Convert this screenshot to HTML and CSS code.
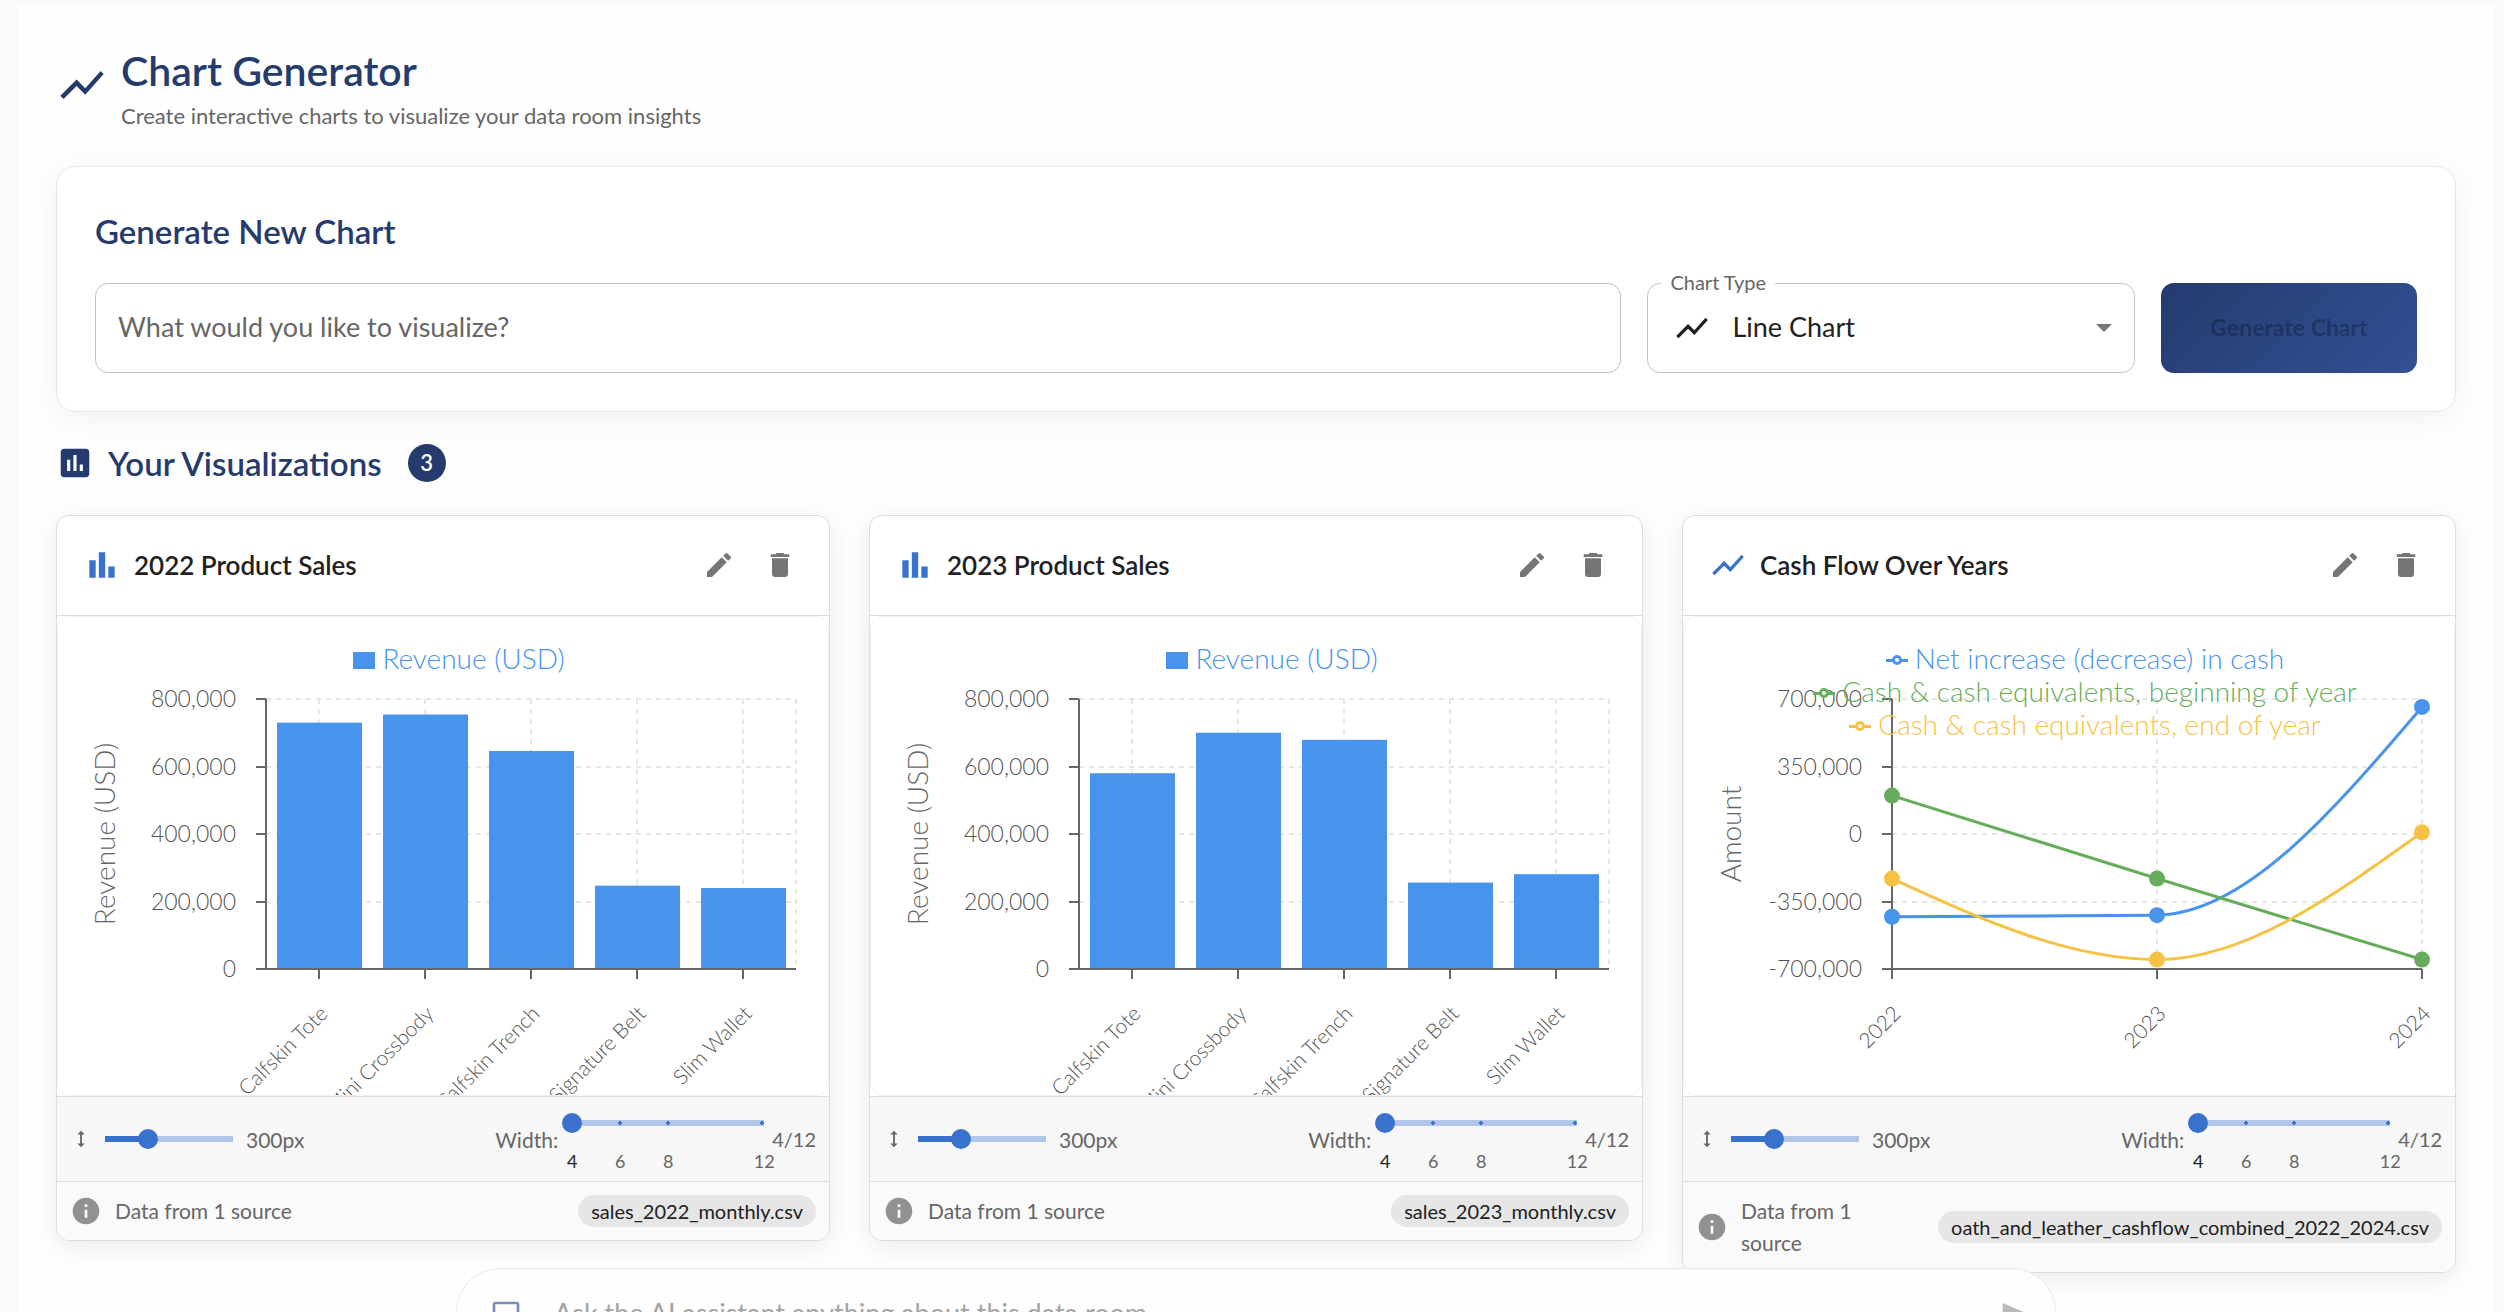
FILE: index.html
```html
<!DOCTYPE html>
<html lang="en">
<head>
    <meta charset="UTF-8">
    <meta name="viewport" content="width=device-width, initial-scale=1.0">
    <title>Chart Generator</title>
    <link rel="stylesheet" href="styles.css">
</head>
<body>
    <!-- Shared icons -->
    <svg class="sprite" aria-hidden="true">
        <symbol id="icon-line" viewBox="0 0 24 24"><path d="M3.5 18.49l6-6.01 4 4L22 6.92l-1.41-1.41-7.09 7.97-4-4L2 16.99z"/></symbol>
        <symbol id="icon-bar" viewBox="0 0 24 24"><path d="M4 9h4v11H4zm12 4h4v7h-4zm-6-9h4v16h-4z"/></symbol>
        <symbol id="icon-assessment" viewBox="0 0 24 24"><path d="M19 3H5c-1.1 0-2 .9-2 2v14c0 1.1.9 2 2 2h14c1.1 0 2-.9 2-2V5c0-1.1-.9-2-2-2zM9 17H7v-7h2v7zm4 0h-2V7h2v10zm4 0h-2v-4h2v4z"/></symbol>
        <symbol id="icon-edit" viewBox="0 0 24 24"><path d="M3 17.25V21h3.75L17.81 9.94l-3.75-3.75L3 17.25zM20.71 7.04c.39-.39.39-1.02 0-1.41l-2.34-2.34a.996.996 0 0 0-1.41 0l-1.83 1.83 3.75 3.75 1.83-1.83z"/></symbol>
        <symbol id="icon-delete" viewBox="0 0 24 24"><path d="M6 19c0 1.1.9 2 2 2h8c1.1 0 2-.9 2-2V7H6v12zM19 4h-3.5l-1-1h-5l-1 1H5v2h14V4z"/></symbol>
        <symbol id="icon-height" viewBox="0 0 24 24"><path d="M13 6.99h3L12 3 8 6.99h3v10.02H8L12 21l4-3.99h-3z"/></symbol>
        <symbol id="icon-info" viewBox="0 0 24 24"><path d="M12 2C6.48 2 2 6.48 2 12s4.48 10 10 10 10-4.48 10-10S17.52 2 12 2zm1 15h-2v-6h2v6zm0-8h-2V7h2v2z"/></symbol>
        <symbol id="icon-chat" viewBox="0 0 24 24"><path d="M20 2H4c-1.1 0-2 .9-2 2v18l4-4h14c1.1 0 2-.9 2-2V4c0-1.1-.9-2-2-2zm0 14H6l-2 2V4h16v12z"/></symbol>
        <symbol id="icon-send" viewBox="0 0 24 24"><path d="M2.01 21L23 12 2.01 3 2 10l15 2-15 2z"/></symbol>
    </svg>

    <main class="panel">
        <header class="page-header">
            <svg class="icon icon-xl"><use href="#icon-line"/></svg>
            <div>
                <h1>Chart Generator</h1>
                <p class="subtitle">Create interactive charts to visualize your data room insights</p>
            </div>
        </header>

        <section class="generator">
            <h2>Generate New Chart</h2>
            <form class="generator-form">
                <input class="prompt" type="text" placeholder="What would you like to visualize?" aria-label="What would you like to visualize?">
                <div class="select-field">
                    <label for="chartType">Chart Type</label>
                    <svg class="icon icon-lg select-icon"><use href="#icon-line"/></svg>
                    <select id="chartType">
                        <option>Line Chart</option>
                    </select>
                </div>
                <button class="btn-generate" type="submit" disabled>Generate Chart</button>
            </form>
        </section>

        <div class="section-title">
            <svg class="icon icon-lg"><use href="#icon-assessment"/></svg>
            <h2>Your Visualizations</h2>
            <span class="count">3</span>
        </div>

        <div class="cards">
            <article class="card">
                <header class="card-header">
                    <svg class="icon icon-lg"><use href="#icon-bar"/></svg>
                    <h3>2022 Product Sales</h3>
                    <button class="icon-btn" aria-label="Edit"><svg class="icon"><use href="#icon-edit"/></svg></button>
                    <button class="icon-btn" aria-label="Delete"><svg class="icon"><use href="#icon-delete"/></svg></button>
                </header>
                <div class="chart">
                    <svg class="plot" id="sales2022" viewBox="0 0 770 478"></svg>
                    <ul class="legend">
                        <li class="blue"><i class="swatch"></i>Revenue (USD)</li>
                    </ul>
                </div>
                <div class="controls">
                    <svg class="icon icon-sm"><use href="#icon-height"/></svg>
                    <input class="slider height-slider" type="range" min="200" max="500" value="300" aria-label="Height">
                    <span class="height-value">300px</span>
                    <label for="width1">Width:</label>
                    <div class="width-field">
                        <input class="slider width-slider" id="width1" type="range" min="4" max="12" step="2" value="4">
                        <div class="marks"><b>4</b><span>6</span><span>8</span><span></span><span>12</span></div>
                    </div>
                    <span class="width-value">4/12</span>
                </div>
                <footer class="card-footer">
                    <svg class="icon"><use href="#icon-info"/></svg>
                    <span class="source">Data from 1 source</span>
                    <span class="chip">sales_2022_monthly.csv</span>
                </footer>
            </article>

            <article class="card">
                <header class="card-header">
                    <svg class="icon icon-lg"><use href="#icon-bar"/></svg>
                    <h3>2023 Product Sales</h3>
                    <button class="icon-btn" aria-label="Edit"><svg class="icon"><use href="#icon-edit"/></svg></button>
                    <button class="icon-btn" aria-label="Delete"><svg class="icon"><use href="#icon-delete"/></svg></button>
                </header>
                <div class="chart">
                    <svg class="plot" id="sales2023" viewBox="0 0 770 478"></svg>
                    <ul class="legend">
                        <li class="blue"><i class="swatch"></i>Revenue (USD)</li>
                    </ul>
                </div>
                <div class="controls">
                    <svg class="icon icon-sm"><use href="#icon-height"/></svg>
                    <input class="slider height-slider" type="range" min="200" max="500" value="300" aria-label="Height">
                    <span class="height-value">300px</span>
                    <label for="width2">Width:</label>
                    <div class="width-field">
                        <input class="slider width-slider" id="width2" type="range" min="4" max="12" step="2" value="4">
                        <div class="marks"><b>4</b><span>6</span><span>8</span><span></span><span>12</span></div>
                    </div>
                    <span class="width-value">4/12</span>
                </div>
                <footer class="card-footer">
                    <svg class="icon"><use href="#icon-info"/></svg>
                    <span class="source">Data from 1 source</span>
                    <span class="chip">sales_2023_monthly.csv</span>
                </footer>
            </article>

            <article class="card">
                <header class="card-header">
                    <svg class="icon icon-lg"><use href="#icon-line"/></svg>
                    <h3>Cash Flow Over Years</h3>
                    <button class="icon-btn" aria-label="Edit"><svg class="icon"><use href="#icon-edit"/></svg></button>
                    <button class="icon-btn" aria-label="Delete"><svg class="icon"><use href="#icon-delete"/></svg></button>
                </header>
                <div class="chart">
                    <svg class="plot" id="cashFlow" viewBox="0 0 770 478"></svg>
                    <ul class="legend">
                        <li class="blue"><i class="marker"></i>Net increase (decrease) in cash</li>
                        <li class="green"><i class="marker"></i>Cash &amp; cash equivalents, beginning of year</li>
                        <li class="yellow"><i class="marker"></i>Cash &amp; cash equivalents, end of year</li>
                    </ul>
                </div>
                <div class="controls">
                    <svg class="icon icon-sm"><use href="#icon-height"/></svg>
                    <input class="slider height-slider" type="range" min="200" max="500" value="300" aria-label="Height">
                    <span class="height-value">300px</span>
                    <label for="width3">Width:</label>
                    <div class="width-field">
                        <input class="slider width-slider" id="width3" type="range" min="4" max="12" step="2" value="4">
                        <div class="marks"><b>4</b><span>6</span><span>8</span><span></span><span>12</span></div>
                    </div>
                    <span class="width-value">4/12</span>
                </div>
                <footer class="card-footer">
                    <svg class="icon"><use href="#icon-info"/></svg>
                    <span class="source">Data from 1 source</span>
                    <span class="chip">oath_and_leather_cashflow_combined_2022_2024.csv</span>
                </footer>
            </article>
        </div>
    </main>

    <form class="assistant">
        <svg class="icon chat-icon"><use href="#icon-chat"/></svg>
        <input type="text" placeholder="Ask the AI assistant anything about this data room..." aria-label="Ask the AI assistant">
        <button class="icon-btn" type="button" aria-label="Send"><svg class="icon"><use href="#icon-send"/></svg></button>
    </form>

    <script src="charts.js"></script>
</body>
</html>
```

FILE: styles.css
```css
*, *::before, *::after {
    margin: 0;
    padding: 0;
    box-sizing: border-box;
}

body {
    font-family: Lato, 'Open Sans', sans-serif;
    font-size: 24px;
    background: #fafafa;
    color: #212121;
    height: 100vh;
    overflow: hidden;
}

input, select, button {
    font: inherit;
    color: inherit;
}

.sprite {
    position: absolute;
    width: 0;
    height: 0;
}

.panel {
    margin: 6px 10px 0 18px;
    padding: 38px;
    min-height: 100vh;
    background: #fefefe;
}

h1, h2 {
    color: #253b6e;
    font-weight: 600;
}

.icon {
    width: 32px;
    height: 32px;
    fill: currentColor;
    flex: none;
}

.icon-sm {
    width: 22px;
    height: 22px;
}

.icon-lg {
    width: 38px;
    height: 38px;
}

.icon-xl {
    width: 52px;
    height: 52px;
    margin-bottom: 8px;
}

/* Header */
.page-header {
    display: flex;
    align-items: center;
    gap: 13px;
    margin-bottom: 32px;
    color: #253b6e;
}

h1 {
    font-size: 41px;
    line-height: 54px;
}

.subtitle {
    font-size: 22px;
    line-height: 36px;
    color: #666;
}

/* Generator form */
.generator {
    padding: 38px;
    background: #fff;
    border: 1px solid #e8e8e8;
    border-radius: 20px;
    box-shadow: 0 6px 32px rgba(0, 0, 0, 0.06);
}

h2 {
    font-size: 33px;
    line-height: 52px;
}

.generator-form {
    display: flex;
    gap: 26px;
    margin-top: 26px;
}

.prompt {
    flex: 1;
    height: 90px;
    padding: 0 22px 3px;
    border: 1px solid #c4c4c4;
    border-radius: 13px;
    background: #fff;
    font-size: 27px;
}

.prompt::placeholder {
    color: #666;
}

.select-field {
    position: relative;
    width: 21%;
}

.select-field label {
    position: absolute;
    top: -13px;
    left: 14px;
    padding: 0 9px;
    background: #fff;
    font-size: 20px;
    color: #666;
}

.select-icon {
    position: absolute;
    top: 26px;
    left: 26px;
    pointer-events: none;
}

.select-field select {
    width: 100%;
    height: 90px;
    padding: 0 84px 3px;
    border: 1px solid #c4c4c4;
    border-radius: 13px;
    background: transparent;
    appearance: none;
    font-size: 27px;
}

.select-field::after {
    content: "";
    position: absolute;
    right: 23px;
    top: 41px;
    border: 8px solid transparent;
    border-top-color: #757575;
    border-bottom: 0;
}

.btn-generate {
    width: 256px;
    padding-bottom: 3px;
    border: none;
    border-radius: 13px;
    background: linear-gradient(135deg, #253b6e, #325094);
    color: rgba(0, 0, 0, 0.26);
    font-size: 23px;
    font-weight: 700;
}

/* Section title */
.section-title {
    display: flex;
    align-items: center;
    gap: 14px;
    margin: 25px 0 26px;
    color: #253b6e;
}

.count {
    margin-left: 12px;
    width: 38px;
    height: 38px;
    border-radius: 50%;
    background: #253b6e;
    color: #fff;
    font-size: 22px;
    line-height: 38px;
    font-weight: 600;
    text-align: center;
}

/* Cards */
.cards {
    display: grid;
    grid-template-columns: repeat(3, 1fr);
    gap: 39px;
    align-items: start;
}

.card {
    border: 1px solid #ddd;
    border-radius: 13px;
    background: #fff;
    box-shadow: 0 6px 26px rgba(0, 0, 0, 0.08);
    overflow: hidden;
}

.card-header {
    display: flex;
    align-items: center;
    height: 100px;
    padding: 0 20px 2px 26px;
    border-bottom: 1px solid #ddd;
    color: #3872cc;
}

h3 {
    flex: 1;
    margin-left: 13px;
    font-size: 26px;
    font-weight: 600;
    color: #212121;
}

.icon-btn {
    display: flex;
    padding: 13px;
    margin-left: 3px;
    border: none;
    background: none;
    color: #757575;
    cursor: pointer;
}

.chart {
    position: relative;
    border: 1px solid #f0f0f0;
    border-radius: 13px;
    overflow: hidden;
}

.plot {
    display: block;
    width: 100%;
}

.plot text {
    fill: #555;
    font-size: 23px;
    font-weight: 300;
}

.plot .category {
    font-size: 21px;
}

.plot .axis-label {
    fill: #666;
    font-size: 28px;
}

.plot .grid {
    stroke: #e6e6e6;
    stroke-width: 2;
    stroke-dasharray: 5 5;
}

.plot .axis {
    stroke: #666;
    stroke-width: 2;
}

.plot .line {
    fill: none;
    stroke-width: 3;
}

.legend {
    position: absolute;
    top: 25px;
    left: 32px;
    right: 0;
    list-style: none;
    font-size: 28px;
    font-weight: 300;
    line-height: 33px;
}

.legend li {
    display: flex;
    justify-content: center;
    align-items: center;
    gap: 7px;
}

.blue {
    color: #4894ed;
}

.green {
    color: #66ad5b;
}

.yellow {
    color: #f7c244;
}

.swatch {
    width: 22px;
    height: 17px;
    margin-top: 4px;
    background: currentColor;
}

.marker {
    position: relative;
    flex: none;
    width: 22px;
    height: 3px;
    margin-top: 4px;
    background: currentColor;
}

.marker::after {
    content: "";
    position: absolute;
    left: 6px;
    top: -4px;
    width: 10px;
    height: 10px;
    border: 3px solid currentColor;
    border-radius: 50%;
    background: #fff;
}

/* Size controls */
.controls {
    display: flex;
    align-items: center;
    height: 85px;
    padding: 0 13px;
    border-top: 1px solid #ddd;
    background: #f7f7f7;
    font-size: 21px;
    color: #666;
}

.slider {
    appearance: none;
    display: block;
    height: 20px;
    background: no-repeat center / calc(100% - 20px) 6px;
}

.slider::-webkit-slider-thumb {
    appearance: none;
    width: 20px;
    height: 20px;
    border-radius: 50%;
    background: #3872cc;
}

.height-slider {
    width: 148px;
    margin: 0 3px;
    background-image: linear-gradient(90deg, #3872cc 33%, #afc6e9 33%);
}

.height-value {
    flex: 1;
}

.width-field {
    width: 192px;
    margin: 0 8px 0 14px;
    padding-top: 6px;
}

.width-slider {
    width: 212px;
    margin: 0 -10px;
    background-image:
        radial-gradient(circle at 25% 50%, #3872cc 2px, transparent 2px),
        radial-gradient(circle at 50% 50%, #3872cc 2px, transparent 2px),
        radial-gradient(circle at 99% 50%, #3872cc 2px, transparent 2px),
        linear-gradient(#afc6e9, #afc6e9);
}

.width-value {
    font-size: 20px;
}

.marks {
    display: grid;
    grid-template-columns: repeat(5, 48px);
    margin: 17px -24px 0;
    font-size: 18px;
    line-height: 22px;
    text-align: center;
}

.marks b {
    font-weight: 400;
    color: #212121;
}

/* Data source */
.card-footer {
    display: flex;
    align-items: center;
    gap: 13px;
    padding: 13px;
    border-top: 1px solid #ddd;
    background: #fafafa;
    color: #919191;
}

.source {
    flex: 1;
    margin-right: 26px;
    font-size: 21px;
    line-height: 32px;
    color: #666;
}

.chip {
    padding: 0 13px;
    border-radius: 16px;
    background: #e6e6e6;
    font-size: 20px;
    line-height: 32px;
    color: #212121;
    white-space: nowrap;
}

/* Assistant bar */
.assistant {
    position: fixed;
    bottom: -50px;
    left: 456px;
    right: 448px;
    display: flex;
    align-items: center;
    height: 94px;
    padding: 0 10px 0 33px;
    border: 1px solid #e8e8e8;
    border-radius: 44px;
    background: #fefefe;
}

.assistant input {
    flex: 1;
    padding: 0 32px 6px;
    border: none;
    background: none;
    font-size: 27px;
}

.assistant input::placeholder {
    color: #a3a3a3;
}

.assistant .icon-btn {
    color: #bbb;
}

.chat-icon {
    color: #7b8bb5;
}
```

FILE: charts.js
```js
const SVG_NS = 'http://www.w3.org/2000/svg';
const TOP = 82;
const BOTTOM = 352;

const BLUE = '#4894ed';
const GREEN = '#66ad5b';
const YELLOW = '#f7c244';

function add(svg, name, attrs, text) {
    const el = document.createElementNS(SVG_NS, name);
    for (const key in attrs) {
        el.setAttribute(key, attrs[key]);
    }
    if (text !== undefined) {
        el.textContent = text;
    }
    svg.appendChild(el);
}

function line(svg, cls, x1, y1, x2, y2) {
    add(svg, 'line', {class: cls, x1, y1, x2, y2});
}

// Grid and axes, with a tick under each x label
function drawFrame(svg, o) {
    const step = (BOTTOM - TOP) / (o.ticks.length - 1);

    o.ticks.forEach((tick, i) => {
        const y = Math.round(BOTTOM - i * step);
        if (i > 0) line(svg, 'grid', o.left, y, o.right, y);
        add(svg, 'text', {x: o.left - 30, y: y + 8, 'text-anchor': 'end'}, tick.toLocaleString('en-US'));
    });
    o.xs.forEach(x => line(svg, 'grid', x, TOP, x, BOTTOM));
    if (o.xs[o.xs.length - 1] < o.right) line(svg, 'grid', o.right, TOP, o.right, BOTTOM);

    o.draw();

    o.ticks.forEach((tick, i) => {
        const y = Math.round(BOTTOM - i * step);
        line(svg, 'axis', o.left - 10, y, o.left, y);
    });
    line(svg, 'axis', o.left, TOP, o.left, BOTTOM);
    line(svg, 'axis', o.left, BOTTOM, o.right, BOTTOM);
    o.xs.forEach((x, i) => {
        line(svg, 'axis', x, BOTTOM, x, BOTTOM + 10);
        add(svg, 'text', {
            class: 'category',
            transform: `translate(${x + 10} ${BOTTOM + 46}) rotate(-45)`,
            'text-anchor': 'end'
        }, o.labels[i]);
    });
    add(svg, 'text', {
        class: 'axis-label',
        transform: `translate(57 ${(TOP + BOTTOM) / 2}) rotate(-90)`,
        'text-anchor': 'middle'
    }, o.title);
}

function barChart(id, values) {
    const svg = document.getElementById(id);
    const left = 208;
    const band = 106;
    const xs = values.map((v, i) => left + band * (i + 0.5));

    drawFrame(svg, {
        left, right: left + band * values.length, xs,
        ticks: [0, 200000, 400000, 600000, 800000],
        labels: ['Calfskin Tote', 'Mini Crossbody', 'Calfskin Trench', 'Signature Belt', 'Slim Wallet'],
        title: 'Revenue (USD)',
        draw() {
            values.forEach((v, i) => {
                const h = v / 800000 * (BOTTOM - TOP);
                add(svg, 'rect', {x: xs[i] - 42, y: BOTTOM - h, width: 85, height: h, fill: BLUE});
            });
        }
    });
}

// Monotone cubic through three evenly spaced points
function curve(p) {
    const dx = p[1][0] - p[0][0];
    const s0 = (p[1][1] - p[0][1]) / dx;
    const s1 = (p[2][1] - p[1][1]) / dx;
    const m1 = s0 * s1 <= 0 ? 0 : Math.sign(s0) * Math.min(Math.abs(s0), Math.abs(s1), Math.abs(s0 + s1) / 4) * 2;
    const m0 = (3 * s0 - m1) / 2;
    const m2 = (3 * s1 - m1) / 2;
    const t = dx / 3;
    return `M${p[0]} C${p[0][0] + t},${p[0][1] + t * m0} ${p[1][0] - t},${p[1][1] - t * m1} ${p[1]}` +
        ` C${p[1][0] + t},${p[1][1] + t * m1} ${p[2][0] - t},${p[2][1] - t * m2} ${p[2]}`;
}

function lineChart(id, series) {
    const svg = document.getElementById(id);
    const xs = [208, 473, 738];

    drawFrame(svg, {
        left: xs[0], right: xs[2], xs,
        ticks: [-700000, -350000, 0, 350000, 700000],
        labels: ['2022', '2023', '2024'],
        title: 'Amount',
        draw() {}
    });
    series.forEach(s => {
        const points = s.values.map((v, i) => [xs[i], BOTTOM - (v + 700000) / 1400000 * (BOTTOM - TOP)]);
        add(svg, 'path', {class: 'line', stroke: s.color, d: curve(points)});
        points.forEach(([cx, cy]) => add(svg, 'circle', {cx, cy, r: 8, fill: s.color}));
    });
}

barChart('sales2022', [730000, 754000, 646000, 247000, 240000]);
barChart('sales2023', [580000, 700000, 679000, 256000, 281000]);
lineChart('cashFlow', [
    {color: BLUE, values: [-429000, -421000, 659000]},
    {color: GREEN, values: [199000, -231000, -651000]},
    {color: YELLOW, values: [-231000, -651000, 9000]}
]);
```
